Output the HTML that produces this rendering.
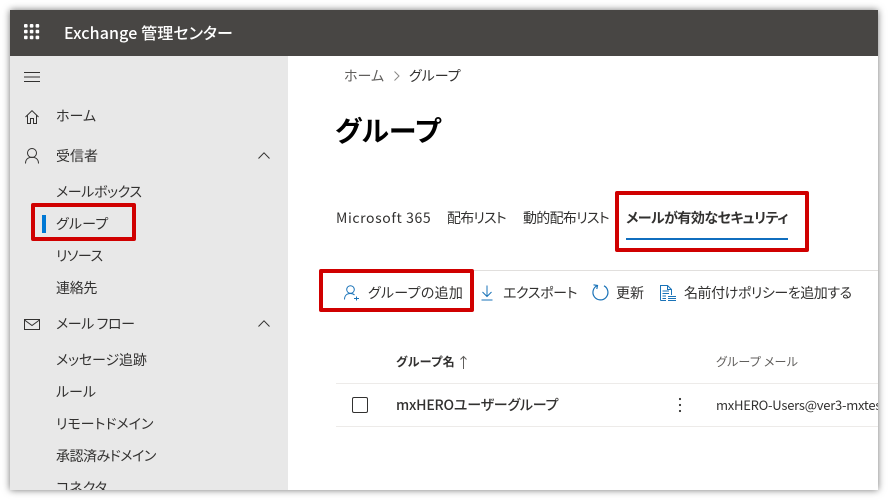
<!DOCTYPE html>
<html lang="ja"><head><meta charset="utf-8"><style>
html,body{margin:0;padding:0;background:#fff}
body{width:888px;height:500px;position:relative;overflow:hidden;font-family:"Noto Sans CJK JP","Liberation Sans",sans-serif;color:#323130}
#w{position:absolute;left:10px;top:10px;width:868px;height:480px;background:#fff;overflow:hidden;box-shadow:0 0 7px rgba(0,0,0,.55)}
.a{position:absolute;white-space:nowrap;font-size:14px;line-height:20px;font-feature-settings:"palt";margin-top:1px}
.b{position:absolute}
svg{position:absolute;overflow:visible;fill:none}
.r{position:absolute;border:4px solid #d00000;border-radius:2px;box-sizing:border-box}
</style></head><body>
<div id="w"></div>
<div class="b" style="left:10px;top:10px;width:868px;height:46px;background:#484644"></div>
<div class="b" style="left:10px;top:56px;width:278px;height:434px;background:#e8e8e8;overflow:hidden" id="s">
<div class="a" style="left:46px;top:421px">コネクタ</div>
</div>
<svg style="left:24px;top:24px" width="16" height="16"><g fill="#fff"><rect width="3.600" height="3.600" rx="1"/><rect x="5.800" width="3.600" height="3.600" rx="1"/><rect x="11.600" width="3.600" height="3.600" rx="1"/><rect y="5.800" width="3.600" height="3.600" rx="1"/><rect x="5.800" y="5.800" width="3.600" height="3.600" rx="1"/><rect x="11.600" y="5.800" width="3.600" height="3.600" rx="1"/><rect y="11.600" width="3.600" height="3.600" rx="1"/><rect x="5.800" y="11.600" width="3.600" height="3.600" rx="1"/><rect x="11.600" y="11.600" width="3.600" height="3.600" rx="1"/></g></svg>
<div class="a" style="left:64px;top:21px;color:#fff;font-size:16px;font-weight:500;letter-spacing:.12px">Exchange 管理センター</div>
<svg style="left:24px;top:72px" width="16" height="10" stroke="#323130"><path d="M0 .5H16M0 5H16M0 9.500H16"/></svg>
<svg style="left:25px;top:110px" width="14" height="14" stroke="#323130"><path d="M.5 7L7 .7 13.500 7M2.500 5.500V13.500H5.500V8.500H8.500V13.500H11.500V5.500"/></svg>
<div class="a" style="left:56px;top:105px">ホーム</div>
<svg style="left:25px;top:148px" width="14" height="16" stroke="#323130"><circle cx="7" cy="5" r="4.500"/><path d="M.5 15.500C.5 11.500 3 9.200 7 9.200S13.500 11.500 13.500 15.500"/></svg>
<div class="a" style="left:56px;top:145px">受信者</div>
<svg style="left:258px;top:152px" width="12" height="7" stroke="#323130"><path d="M.5 6.500L6 .8 11.500 6.500"/></svg>
<div class="a" style="left:56px;top:181px;letter-spacing:-.4px">メールボックス</div>
<div class="b" style="left:42px;top:215px;width:4px;height:18px;background:#0078d4"></div>
<div class="a" style="left:56px;top:213px;letter-spacing:.2px">グループ</div>
<div class="r" style="left:31px;top:203px;width:105px;height:38px"></div>
<div class="a" style="left:56px;top:245px;letter-spacing:-.5px">リソース</div>
<div class="a" style="left:56px;top:277px;letter-spacing:-.3px">連絡先</div>
<svg style="left:24px;top:319px" width="16" height="11" stroke="#323130"><rect x=".5" y=".5" width="15" height="10"/><path d="M.5 1L8 6.500 15.500 1"/></svg>
<div class="a" style="left:56px;top:313px;letter-spacing:-.4px">メール フロー</div>
<svg style="left:258px;top:320px" width="12" height="7" stroke="#323130"><path d="M.5 6.500L6 .8 11.500 6.500"/></svg>
<div class="a" style="left:56px;top:349px;letter-spacing:-.15px">メッセージ追跡</div>
<div class="a" style="left:56px;top:381px">ルール</div>
<div class="a" style="left:56px;top:413px">リモートドメイン</div>
<div class="a" style="left:56px;top:445px;letter-spacing:-.5px">承認済みドメイン</div>

<div class="a" style="left:344px;top:65px;color:#605e5c">ホーム</div>
<svg style="left:394px;top:71px" width="6" height="10" stroke="#8a8886"><path d="M.5 .5L5 5 .5 9.500"/></svg>
<div class="a" style="left:409px;top:65px">グループ</div>
<div class="a" style="left:335px;top:111px;font-size:28px;line-height:36px;font-weight:700;color:#000;letter-spacing:.2px">グループ</div>

<div class="a" style="left:336px;top:207px;letter-spacing:.6px">Microsoft 365</div>
<div class="a" style="left:447px;top:207px;letter-spacing:-.8px">配布リスト</div>
<div class="a" style="left:523px;top:207px;letter-spacing:-.7px">動的配布リスト</div>
<div class="a" style="left:626px;top:207px;font-weight:700;letter-spacing:-.55px">メールが有効なセキュリティ</div>
<div class="b" style="left:626px;top:238px;width:162px;height:2px;background:#106ebe"></div>
<div class="r" style="left:615px;top:191px;width:194px;height:61px"></div>
<div class="b" style="left:474px;top:270px;width:404px;height:1px;background:#e1dfdd"></div>

<svg style="left:344px;top:285px" width="16" height="16" stroke="#1a73b8"><circle cx="6.500" cy="4.500" r="3.800"/><path d="M.5 14.500C.5 10.500 3 8.500 6.500 8.500 8 8.500 9.500 9 10.500 10M10 13.500H15M12.500 11.500V15.500"/></svg>
<div class="a" style="left:368px;top:282px;letter-spacing:.3px">グループの追加</div>
<div class="r" style="left:319px;top:269px;width:155px;height:43px"></div>
<svg style="left:481px;top:285px" width="12" height="16" stroke="#1a73b8"><path d="M6 .5V11.500M1.500 7L6 11.500 10.500 7M.5 15H11.500"/></svg>
<div class="a" style="left:503px;top:282px;letter-spacing:-.35px">エクスポート</div>
<svg style="left:592px;top:284px" width="17" height="17" stroke="#1a73b8" stroke-width="1.200"><path d="M5.500 1.500A7.500 7.500 0 1 0 12 1.800M1.500 .8L5.500 1.500 4.800 5"/></svg>
<div class="a" style="left:616px;top:282px">更新</div>
<svg style="left:660px;top:285px" width="17" height="16" stroke="#1a73b8"><path d="M.5 15.500V.5H7.500L11.500 4.500V10M7.500 .5V4.500H11.500M2.500 6H9M2.500 8.500H9M2.500 11H6M2.500 13.500H6M.5 15.500H6M8 11.500H16M8 13.500H16M8 15.500H16"/></svg>
<div class="a" style="left:684px;top:282px;letter-spacing:-.45px">名前付けポリシーを追加する</div>

<div class="a" style="left:396px;top:351px;font-size:12px;font-weight:700;letter-spacing:.4px">グループ名</div>
<svg style="left:460px;top:356px" width="7" height="13" stroke="#605e5c"><path d="M3.500 13V.5M.5 3.500L3.500 .5 6.500 3.500"/></svg>
<div class="a" style="left:716px;top:351px;font-size:12px;color:#605e5c;letter-spacing:.2px">グループ メール</div>
<div class="b" style="left:336px;top:383px;width:542px;height:1px;background:#edebe9"></div>
<div class="b" style="left:336px;top:426px;width:542px;height:1px;background:#edebe9"></div>
<div class="b" style="left:352px;top:397px;width:16px;height:16px;box-sizing:border-box;border:1px solid #323130;border-radius:2px"></div>
<div class="a" style="left:396px;top:394px;font-weight:500;letter-spacing:-.2px">mxHEROユーザーグループ</div>
<svg style="left:678px;top:397px" width="4" height="16"><g fill="#323130"><circle cx="2" cy="2" r="1.100"/><circle cx="2" cy="8" r="1.100"/><circle cx="2" cy="14" r="1.100"/></g></svg>
<div class="b" style="left:716px;top:394px;width:162px;height:22px;overflow:hidden"><div class="a" style="left:0;top:0;font-size:13px;letter-spacing:-.25px">mxHERO-Users@ver3-mxtest</div></div>
</body></html>
